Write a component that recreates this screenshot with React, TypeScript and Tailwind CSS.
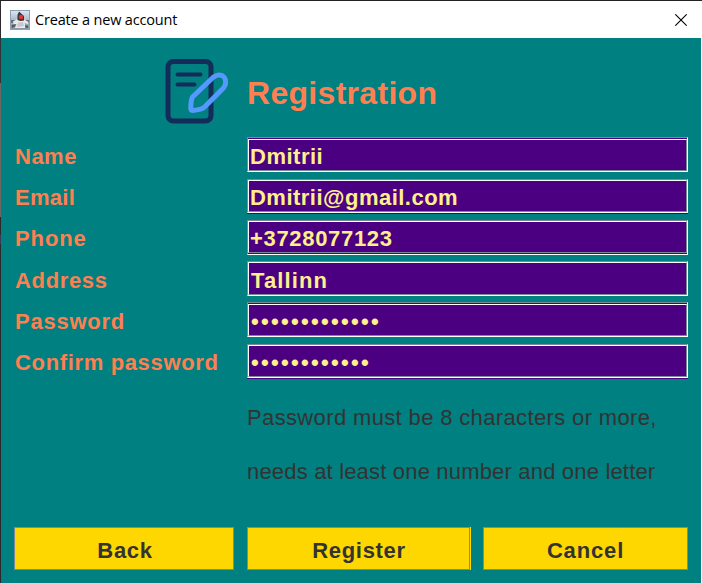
type Field = {
  label: string;
  value: string;
  labelClass: string;
  valueClass: string;
  rowClass: string;
  baseClass: string;
  frameClass: string;
};

const fields: Field[] = [
  { label: "Name", value: "Dmitrii", labelClass: "pt-[2px] tracking-[0.5px]", valueClass: "pt-[4px] pl-px tracking-[0.5px]", rowClass: "", baseClass: "", frameClass: "pt-px" },
  { label: "Email", value: "Dmitrii@gmail.com", labelClass: "pt-px tracking-[0.3px]", valueClass: "pt-[3px] pl-px tracking-[0.48px]", rowClass: "mt-[7px]", baseClass: "pb-px", frameClass: "" },
  { label: "Phone", value: "+3728077123", labelClass: "pt-px tracking-[0.9px]", valueClass: "pt-[3px] pl-px tracking-[0.68px]", rowClass: "mt-[6px]", baseClass: "", frameClass: "pb-px" },
  { label: "Address", value: "Tallinn", labelClass: "pt-[2px] tracking-[0.65px]", valueClass: "pt-[5px] pl-[2px] tracking-[1.1px]", rowClass: "mt-[6px]", baseClass: "", frameClass: "" },
  { label: "Password", value: "•••••••••••••", labelClass: "pt-[2px] tracking-[0.75px]", valueClass: "pt-[3px] pl-[2px] tracking-[2.3px]", rowClass: "mt-[6px]", baseClass: "", frameClass: "pt-px" },
  { label: "Confirm password", value: "••••••••••••", labelClass: "pt-px tracking-[0.65px]", valueClass: "pt-[4px] pl-[2px] tracking-[2.3px]", rowClass: "mt-[7px]", baseClass: "pb-px", frameClass: "" },
];

function DukeIcon() {
  return (
    <svg width="20" height="20" viewBox="0 0 20 20">
      <defs>
        <linearGradient id="tile" x1="0" y1="0" x2="0" y2="1">
          <stop offset="0" stopColor="#dce8f4" />
          <stop offset="0.55" stopColor="#a5b6c6" />
          <stop offset="1" stopColor="#8298ad" />
        </linearGradient>
      </defs>
      <rect x="0.5" y="0.5" width="19" height="19" fill="url(#tile)" stroke="#8da0b3" />
      <path d="M1 10h5v3H1zM14 10h5v3h-5z" fill="#65717c" />
      <path d="M8 8.500L3 11.500l.5 3L6.500 14 5 18h11l-1.500-5 3.500 1 .5-2-5-3z" fill="#e8e9e8" />
      <path d="M9 1.500L7.500 5v5l3 1 3.500-.5V6z" fill="#3b3138" />
      <path d="M1.500 15l4.500-1-1 2.500-3 1.500zM15 15l3.500 1-1 2h-2z" fill="#55585c" />
      <path d="M8 12.500l5-.5 1 4-7 1z" fill="#c6c9ca" />
      <circle cx="11" cy="7" r="2.300" fill="#e0342f" />
    </svg>
  );
}

function RegistrationIcon() {
  return (
    <svg width="66" height="68" viewBox="0 0 66 68" fill="none" strokeLinecap="round" strokeLinejoin="round">
      <rect x="4" y="3.500" width="43" height="59.500" rx="5.500" stroke="#132c59" strokeWidth="5" />
      <path d="M13.500 16.500H36.500M13.500 26.500H30.500" stroke="#132c59" strokeWidth="4" />
      <path d="M28.500 39L49 19.500C52.500 16.500 57.500 16 60 19C62.500 22 62 27 59.500 30L40.500 49C37 52.300 32 51.800 28.500 52.500Q26.600 52.500 26.800 50C27 46 26.800 42 28.500 39Z" stroke="#5599ff" strokeWidth="5" />
    </svg>
  );
}

function FieldRow({ field }: { field: Field }) {
  return (
    <div className={`grid h-[35px] grid-cols-[233px_441px] ${field.rowClass}`}>
      <div className={`whitespace-nowrap pl-px text-[22px] leading-[35px] font-bold text-[#ff7f50] ${field.labelClass}`}>{field.label}</div>
      <div className={`h-[35px] bg-[#4b0082] ${field.baseClass}`}>
        <div className={`h-full border border-t-[#7a8a99] border-l-[#7a8a99] border-r-white border-b-white ${field.frameClass}`}>
          <div className="flex h-full items-center border border-t-white border-l-white border-r-[#7a8a99] border-b-[#7a8a99]">
            <span className={`whitespace-pre text-[22px] leading-[30px] font-bold text-[#fff08c] ${field.valueClass}`}>{field.value}</span>
          </div>
        </div>
      </div>
    </div>
  );
}

export default function App() {
  return (
    <div className="h-[583px] w-[702px] overflow-hidden border-t border-t-[#242226] bg-white font-['Liberation_Sans',Arial,sans-serif]">
      <header className="flex h-[37px] items-center border-l border-l-[#2e2a2c] pl-[9px]">
        <DukeIcon />
        <span className="ml-[5px] font-['Open_Sans','Noto_Sans',sans-serif] text-[14.5px] leading-5 tracking-[-0.18px] whitespace-nowrap text-black">Create a new account</span>
        <svg className="mr-[15px] ml-auto" width="12" height="12" viewBox="0 0 12 12" stroke="#000" strokeWidth="1.100">
          <path d="M.3.3l11.400 11.400M11.700.3L.3 11.700" />
        </svg>
      </header>
      <main className="mr-px h-[545px] bg-[linear-gradient(#303236_45px,#6b6765_45px,#6b6765_179px,#2b292c_179px,#2b292c_197px,#34405a_197px,#34405a_206px,#2b292c_206px)] pl-px">
        <div className="h-full bg-[#008080] pl-[13px]">
          <div className="flex h-[99px] pt-[20px]">
            <div className="ml-[150px] w-[83px]"><RegistrationIcon /></div>
            <h1 className="pt-[15px] text-[32px] leading-[40px] font-bold tracking-[0.3px] text-[#ff7f50]">Registration</h1>
          </div>
          {fields.map((field) => <FieldRow key={field.label} field={field} />)}
          <div className="ml-[233px] pt-[12px] text-[22px] leading-[54px] whitespace-nowrap text-[#333]">
            <p className="tracking-[0.36px]">Password must be 8 characters or more,</p>
            <p className="tracking-[0.18px]">needs at least one number and one letter</p>
          </div>
          <div className="mt-[28px] flex text-[22px] leading-[43px] font-bold text-[#333]">
            <button className="h-[43px] w-[220px] border border-[#7a8a99] bg-[#ffd700] pt-px pl-[2px] tracking-[0.7px]">Back</button>
            <div className="ml-[13px] h-[43px] w-[224px] bg-[#ffd700] pr-px">
              <button className="h-[43px] w-full border border-[#7a8a99] pt-px pl-px tracking-[0.7px]">Register</button>
            </div>
            <button className="ml-[12px] h-[43px] w-[205px] border border-[#7a8a99] bg-[#ffd700] pt-px tracking-[0.85px]">Cancel</button>
          </div>
        </div>
      </main>
    </div>
  );
}
